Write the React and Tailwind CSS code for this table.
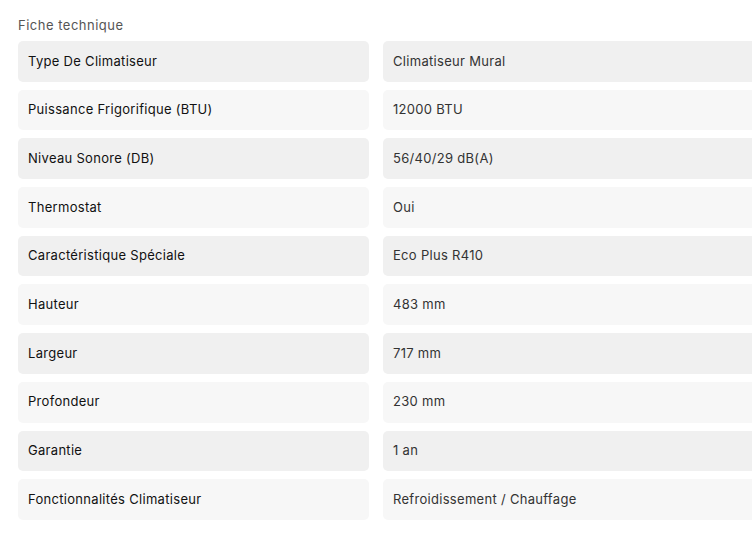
import React from "react";

const specs = [
  ["Type De Climatiseur", "Climatiseur Mural"],
  ["Puissance Frigorifique (BTU)", "12000 BTU"],
  ["Niveau Sonore (DB)", "56/40/29 dB(A)"],
  ["Thermostat", "Oui"],
  ["Caractéristique Spéciale", "Eco Plus R410"],
  ["Hauteur", "483 mm"],
  ["Largeur", "717 mm"],
  ["Profondeur", "230 mm"],
  ["Garantie", "1 an"],
  ["Fonctionnalités Climatiseur", "Refroidissement / Chauffage"],
];

export default function App() {
  return (
    <div
      className="w-[752px] h-[557px] overflow-hidden bg-white"
      style={{ fontFamily: "Inter, 'Liberation Sans', sans-serif" }}
    >
      <div className="w-[800px] pl-[18px] pt-[15px]">
        <h3 className="text-[13px] leading-[20px] tracking-[0.5px] text-[#555] mb-[6px]">Fiche technique</h3>
        <div className="flex flex-col gap-[8px]">
          {specs.map(([label, value], i) => {
            const bg = i % 2 === 0 ? "bg-[#f0f0f0]" : "bg-[#f7f7f7]";
            return (
              <div key={label} className="flex gap-[14px] h-[40.7px]">
                <div className={`w-[351px] shrink-0 rounded-[5px] ${bg} flex items-center px-[10px] text-[13px] tracking-[0.3px] text-[#111]`}>
                  {label}
                </div>
                <div className={`flex-1 rounded-[5px] ${bg} flex items-center px-[10px] text-[13px] tracking-[0.3px] text-[#333]`}>
                  {value}
                </div>
              </div>
            );
          })}
        </div>
      </div>
    </div>
  );
}
